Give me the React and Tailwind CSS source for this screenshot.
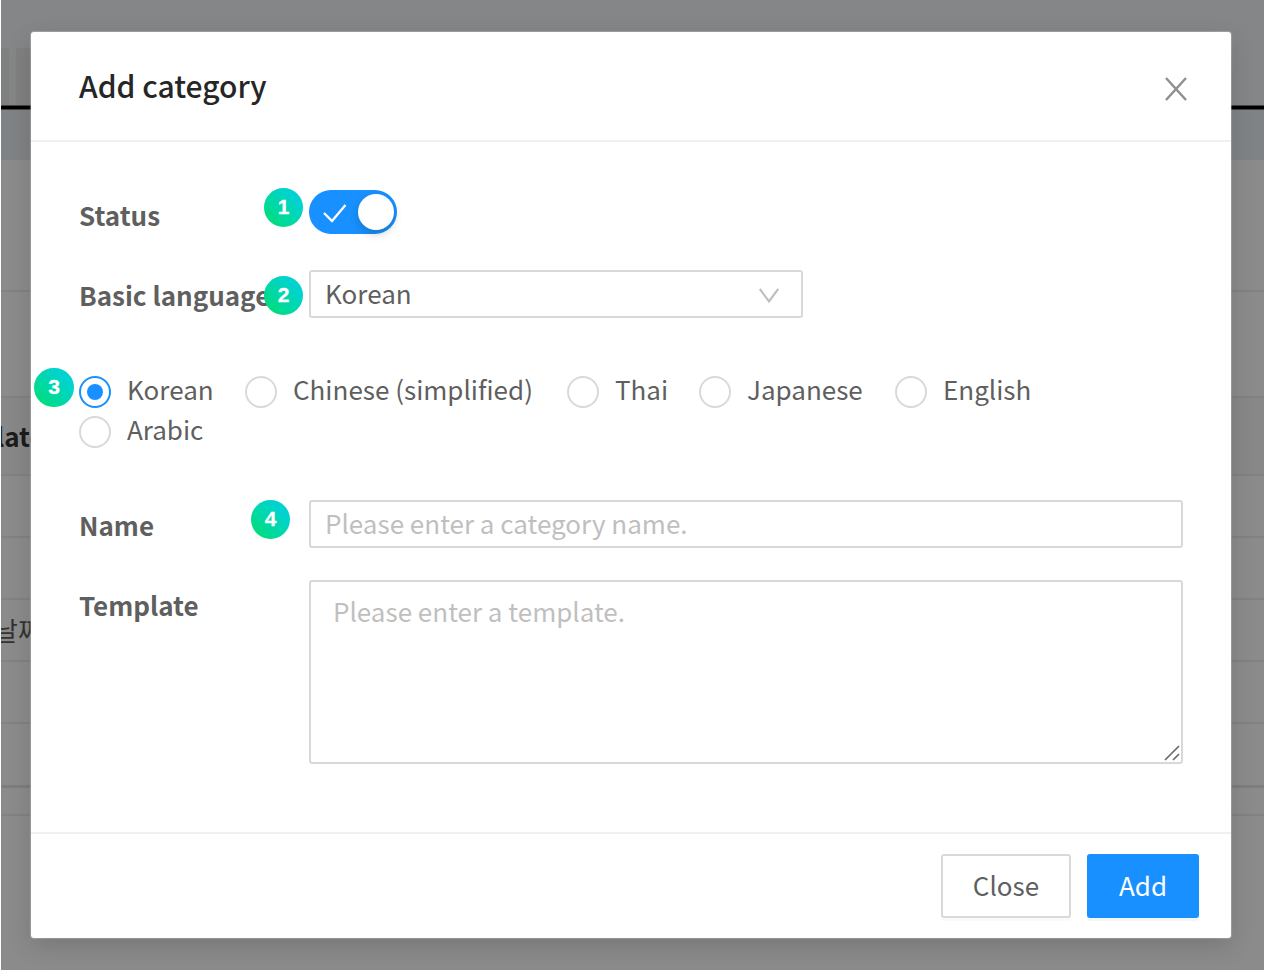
const badgeBase =
  "absolute flex h-[39px] items-center justify-center rounded-full bg-linear-to-tr from-[#00dc7d] from-15% to-[#00d3cf] to-75% pb-[2px] font-['Liberation_Sans'] text-[21px] leading-none font-bold text-white [-webkit-text-stroke:0.3px_white]";

function Badge({ n, className }) {
  return <span className={`${badgeBase} ${className}`}>{n}</span>;
}

function Radio({ label, checked, className }) {
  return (
    <label className={`flex h-10 items-center ${className}`}>
      <span
        className={`mt-1 flex size-8 shrink-0 items-center justify-center rounded-full border-2 ${
          checked ? "border-[#1890ff]" : "border-[#d9d9d9]"
        }`}
      >
        {checked && <span className="size-4 rounded-full bg-[#1890ff]" />}
      </span>
      <span className="mb-[3px] ml-4 whitespace-nowrap">{label}</span>
    </label>
  );
}

function Label({ children }) {
  return (
    <div className="w-[230px] shrink-0 pt-[5px] leading-10 font-bold whitespace-nowrap">{children}</div>
  );
}

function Backdrop() {
  return (
    <div className="flex h-full flex-col border-l border-white bg-[#8b8b8b] text-[26px] leading-none">
      <div className="flex h-[105px] shrink-0 items-end bg-[#858688]">
        <div className="h-[57px] w-[8px] bg-[#808080]" />
        <div className="ml-[7px] h-[57px] w-[50px] bg-[#808080]" />
      </div>
      <div className="h-px shrink-0 bg-[#444]" />
      <div className="h-[3px] shrink-0 bg-black" />
      <div className="h-px shrink-0 bg-[#444]" />
      <div className="h-[50px] shrink-0 bg-[#808385]" />
      <div className="h-[132px] shrink-0 border-b-2 border-[#828282]" />
      <div className="h-[106px] shrink-0 border-b-2 border-[#828282]" />
      <div className="flex h-[78px] shrink-0 items-center overflow-hidden border-b-2 border-[#828282] bg-[#888888] font-bold text-[#1c1c1c]">
        <span className="-mt-px -ml-[5px] leading-10">late</span>
      </div>
      <div className="h-[62px] shrink-0 border-b-2 border-[#828282]" />
      <div className="h-[62px] shrink-0 border-b-2 border-[#828282]" />
      <div className="flex h-[62px] shrink-0 items-center overflow-hidden border-b-2 border-[#828282] text-[#333]">
        <span className="-mt-px -ml-[7px] leading-10 whitespace-nowrap">날짜</span>
      </div>
      <div className="h-[62px] shrink-0 border-b-2 border-[#828282]" />
      <div className="h-[64px] shrink-0 border-b-[3px] border-[#7e7e7e]" />
      <div className="h-[28px] shrink-0 border-b-2 border-[#828282]" />
    </div>
  );
}

export default function App() {
  return (
    <div className="relative h-[970px] w-[1264px] overflow-hidden font-['Noto_Sans_CJK_KR',sans-serif] text-[26px] text-[#5f5f5f]">
      <Backdrop />
      <div
        role="dialog"
        className="absolute top-8 left-[31px] flex h-[906px] w-[1200px] flex-col rounded-[3px] bg-white shadow-[0_8px_24px_rgba(0,0,0,0.15),0_0_1px_1px_rgba(200,200,200,0.45)]"
      >
        <header className="flex h-[110px] shrink-0 items-center justify-between border-b-2 border-[#f0f0f0] pr-[43px] pl-12">
          <h1 className="-mt-[3px] text-[30px] leading-10 font-medium whitespace-nowrap text-[#262626]">
            Add category
          </h1>
          <button aria-label="Close dialog" className="mt-[6px]">
            <svg width="24" height="24" viewBox="0 0 24 24" fill="none" stroke="#8f8f8f" strokeWidth="2.5">
              <path d="M2 1 22 23M22 1 2 23" />
            </svg>
          </button>
        </header>

        <div className="flex grow flex-col px-12 pt-12">
          <div className="flex h-20">
            <Label>Status</Label>
            <button
              role="switch"
              aria-checked="true"
              aria-label="Status"
              className="flex h-11 w-[88px] items-center justify-between rounded-full bg-[#1890ff] pr-[3px] pl-[14px]"
            >
              <svg width="24" height="20" viewBox="0 0 24 20" fill="none" stroke="white" strokeWidth="2.3" className="mt-[3px]">
                <path d="M1 9 9 17 22.5 1" />
              </svg>
              <span className="size-9 rounded-full bg-white shadow-[0_4px_8px_rgba(0,35,11,0.2)]" />
            </button>
          </div>

          <div className="flex h-[100px]">
            <Label>Basic language</Label>
            <div className="flex h-12 w-[494px] items-center justify-between rounded-[3px] border-2 border-[#d9d9d9] pr-[22px] pl-[14px]">
              <span className="mb-[3px]">Korean</span>
              <svg width="20" height="16" viewBox="0 0 20 16" fill="none" stroke="#bfbfbf" strokeWidth="2.2" className="mt-[3px]">
                <path d="M.8 1 10 13.5 19.2 1" />
              </svg>
            </div>
          </div>

          <div className="flex h-[130px] flex-col">
            <div className="flex">
              <Radio label="Korean" checked className="w-[166px]" />
              <Radio label="Chinese (simplified)" className="w-[322px]" />
              <Radio label="Thai" className="w-[132px]" />
              <Radio label="Japanese" className="w-[196px]" />
              <Radio label="English" className="" />
            </div>
            <Radio label="Arabic" className="" />
          </div>

          <div className="flex h-20">
            <Label>Name</Label>
            <div className="flex h-12 grow items-center rounded-[3px] border-2 border-[#d9d9d9] pb-[3px] pl-[14px] text-[#bfbfbf]">
              Please enter a category name.
            </div>
          </div>

          <div className="flex">
            <Label>Template</Label>
            <div className="flex h-[184px] grow justify-between rounded-[3px] border-2 border-[#d9d9d9] pl-[22px] text-[#bfbfbf]">
              <span className="mt-[9px] leading-10">Please enter a template.</span>
              <svg width="16" height="16" viewBox="0 0 16 16" fill="none" stroke="#6b6b6b" strokeWidth="1.7" className="mr-px mb-px self-end">
                <path d="M1 15 15 1M9 15l6-6" />
              </svg>
            </div>
          </div>
        </div>

        <footer className="flex h-[106px] shrink-0 items-start justify-end gap-4 border-t-2 border-[#f0f0f0] pt-5 pr-8">
          <button className="flex h-16 w-[130px] items-center justify-center rounded-[3px] border-2 border-[#d9d9d9] pb-[3px] shadow-[0_3px_0_rgba(0,0,0,0.02)]">
            Close
          </button>
          <button className="flex h-16 w-28 items-center justify-center rounded-[3px] bg-[#1890ff] pb-[3px] text-white shadow-[0_3px_0_rgba(0,0,0,0.04)]">
            Add
          </button>
        </footer>
      </div>

      <Badge n="1" className="top-[188px] left-[264px] w-[39px]" />
      <Badge n="2" className="top-[276px] left-[264px] w-[39px]" />
      <Badge n="3" className="top-[368px] left-[34px] w-10" />
      <Badge n="4" className="top-[500px] left-[251px] w-[39px]" />
    </div>
  );
}
